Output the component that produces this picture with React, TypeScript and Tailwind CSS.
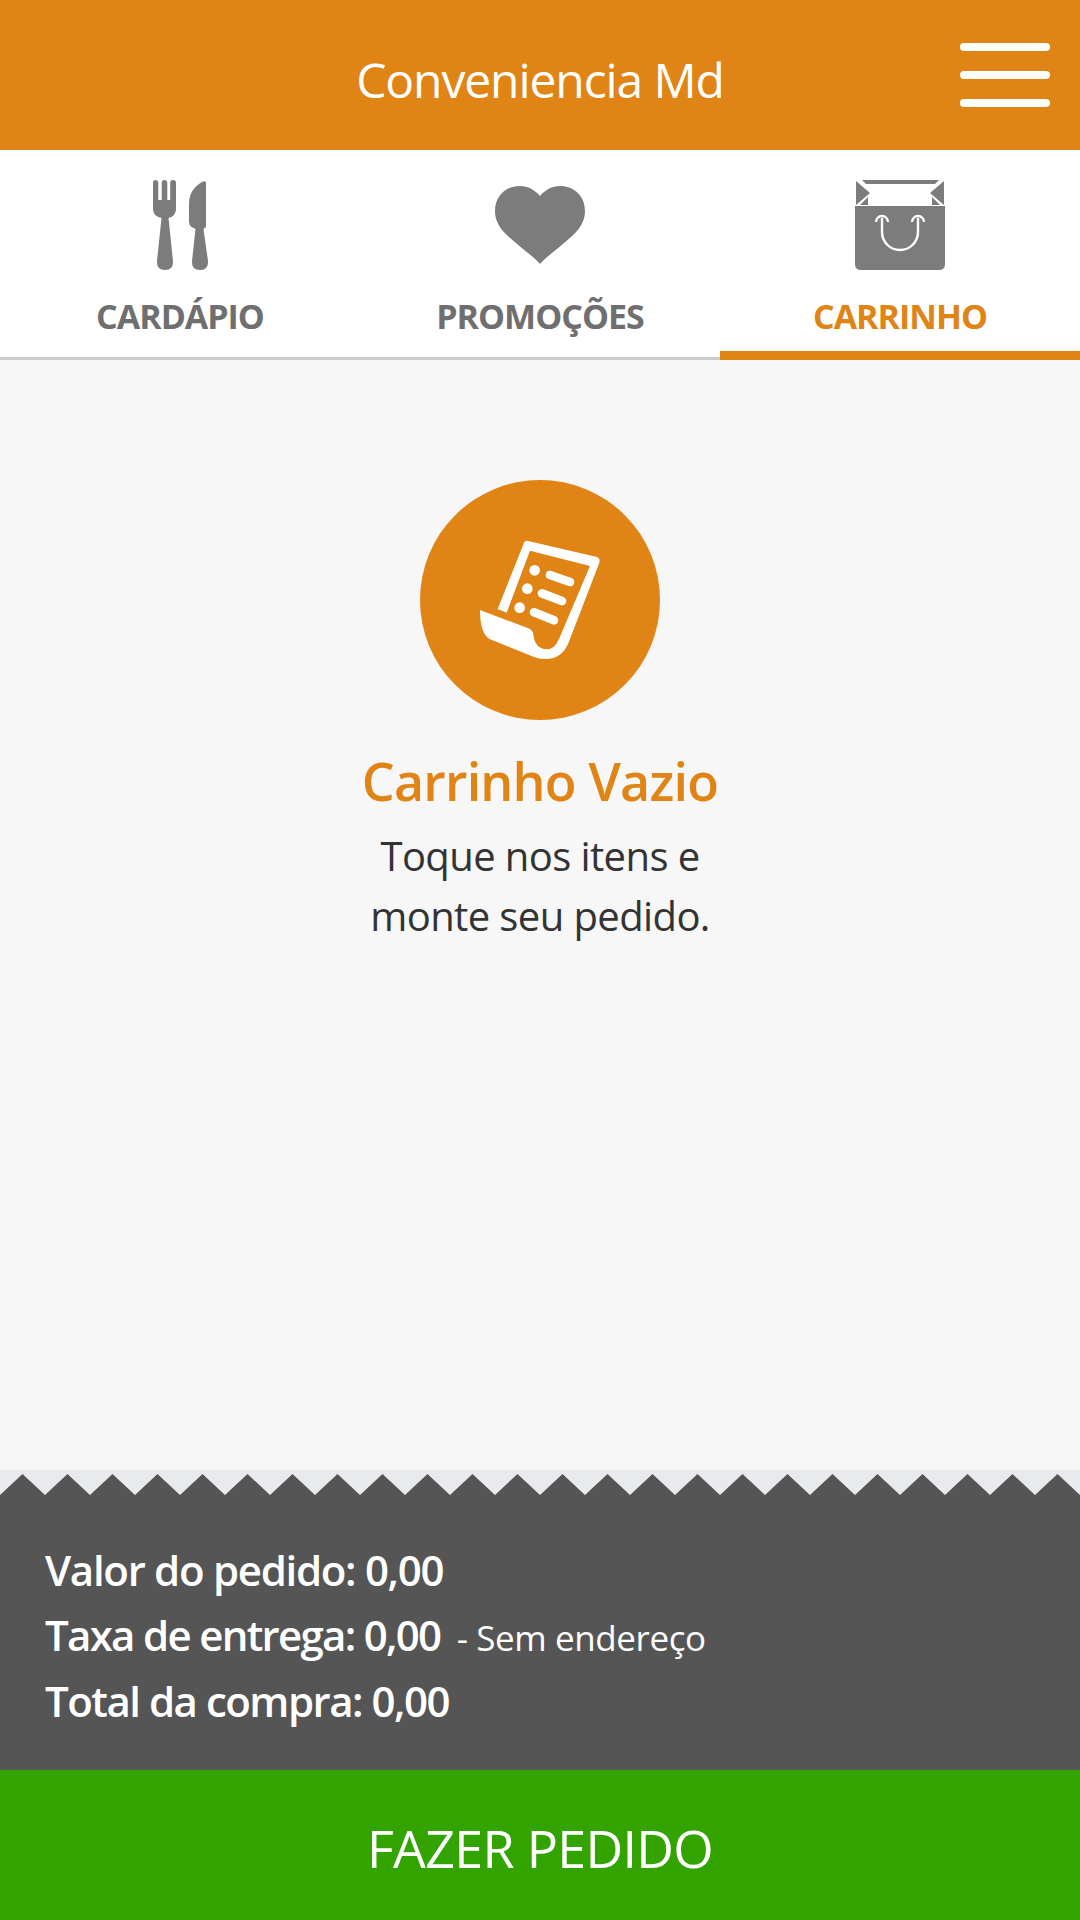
import React from "react";

const teeth = Array.from({ length: 25 }, (_, i) => `${i * 45},25 ${i * 45 + 22.5},4`).join(" ");

const ForkKnifeIcon = () => (
  <svg viewBox="0 0 56 90" className="w-[56px] h-[90px]" fill="#7c7c7c">
    <path d="M1 3 Q1 0 3.6 0 Q6.3 0 6.3 3 L6.3 20 L9.7 20 L9.7 3 Q9.7 0 12.5 0 Q15.3 0 15.3 3 L15.3 20 L18.2 20 L18.2 3 Q18.2 0 21 0 Q24 0 24 3 L24 29 Q24 36 16.5 38 L21 81 Q21.5 90 13 90 Q4.5 90 5 81 L9.5 38 Q1 36 1 29 Z" />
    <path d="M54 3 L54 47 L51.5 49 L56 81 Q56.5 90 48 90 Q39.5 90 40 81 L43.5 49 L39.5 47 Q37 45 37 42 L37 24 Q37 9 51 1.5 Q54 0.5 54 3 Z" />
  </svg>
);

const HeartIcon = () => (
  <svg viewBox="0 0 90 78" className="w-[90px] h-[78px]" fill="#7c7c7c">
    <path d="M45 78 C38 70 26 62 14 51 C5 43 0 35 0 25 C0 10 11 0 25 0 C33 0 40 4 45 10 C50 4 57 0 65 0 C79 0 90 10 90 25 C90 35 85 43 76 51 C64 62 52 70 45 78 Z" />
  </svg>
);

const BagIcon = () => (
  <svg viewBox="0 0 90 90" className="w-[90px] h-[90px]">
    <path fill="#7c7c7c" d="M0 26 L90 26 L90 84 Q90 90 84 90 L6 90 Q0 90 0 84 Z" />
    <path fill="#7c7c7c" d="M7 0 L84 0 L80 4 L11 4 Z" />
    <path fill="#7c7c7c" d="M1 1 L15 13 L1 25 Z" />
    <path fill="#7c7c7c" d="M89 1 L75 13 L89 25 Z" />
    <path fill="#7c7c7c" d="M13 17 L13 25 L5 25 Z" />
    <path fill="#7c7c7c" d="M77 17 L77 25 L85 25 Z" />
    <path
      fill="none"
      stroke="#ffffff"
      strokeWidth="2.4"
      d="M21 42 A6 6 0 0 1 33 42 M57 42 A6 6 0 0 1 69 42 M27 38 L27 52 A18 18 0 0 0 63 52 L63 38"
    />
  </svg>
);

const ReceiptIcon = () => (
  <svg viewBox="240 240 360 360" className="w-[120px] h-[120px]" fill="#ffffff">
    <path d="M372 248 Q375 241 384 243 L588 290 Q602 294 598 308 L505 550 Q485 598 435 597 Q418 597 400 590 L270 538 Q240 522 240 450 L385 505 Q400 511 400 525 Q405 566 440 568 Q465 568 478 535 L570 318 L390 272 L320 458 L293 447 Z" />
    <circle cx="404" cy="331" r="16" />
    <circle cx="382" cy="386" r="16" />
    <circle cx="359" cy="443" r="16" />
    <g stroke="#ffffff" strokeWidth="26" strokeLinecap="round">
      <path d="M450 345 L510 366" />
      <path d="M426 400 L486 423" />
      <path d="M402 457 L462 481" />
    </g>
  </svg>
);

const Tab = ({
  label,
  active,
  children,
}: {
  label: string;
  active?: boolean;
  children: React.ReactNode;
}) => (
  <div
    className={`flex-1 h-[210px] flex flex-col items-center ${
      active ? "border-b-[9px] border-[#df8415]" : "border-b-[3px] border-[#cccccc]"
    }`}
  >
    <div className="h-[90px] mt-[30px] flex items-center justify-center">{children}</div>
    <span
      className={`mt-[23px] text-[34px] leading-[46px] font-bold tracking-[-1px] ${
        active ? "text-[#df8415]" : "text-[#6f6f6f]"
      }`}
    >
      {label}
    </span>
  </div>
);

export default function App() {
  return (
    <div className="w-[1080px] h-[1920px] flex flex-col bg-[#f7f7f7] font-['Open_Sans',sans-serif] overflow-hidden">
      <header className="h-[150px] shrink-0 bg-[#df8415] flex items-center justify-center relative pt-[10px]">
        <h1 className="text-[48px] leading-[60px] text-white tracking-[-1.1px]">Conveniencia Md</h1>
        <div className="absolute left-[960px] top-[43px] w-[90px] flex flex-col gap-[20px]">
          <div className="h-[8px] bg-white rounded-full" />
          <div className="h-[8px] bg-white rounded-full" />
          <div className="h-[8px] bg-white rounded-full" />
        </div>
      </header>

      <nav className="h-[210px] shrink-0 bg-white flex">
        <Tab label="CARDÁPIO">
          <ForkKnifeIcon />
        </Tab>
        <Tab label="PROMOÇÕES">
          <HeartIcon />
        </Tab>
        <Tab label="CARRINHO" active>
          <BagIcon />
        </Tab>
      </nav>

      <main className="flex-1 flex flex-col items-center pt-[120px]">
        <div className="w-[240px] h-[240px] rounded-full bg-[#df8415] flex items-center justify-center">
          <ReceiptIcon />
        </div>
        <h2 className="mt-[25px] text-[52px] leading-[72px] font-semibold text-[#df8415] tracking-[-0.8px]">
          Carrinho Vazio
        </h2>
        <p className="mt-[9px] text-[40px] leading-[60px] text-[#333333] text-center tracking-[-0.6px]">
          Toque nos itens e
          <br />
          monte seu pedido.
        </p>
      </main>

      <footer className="shrink-0">
        <svg viewBox="0 0 1080 26" className="block w-[1080px] h-[26px] bg-[#e9eaee]">
          <polygon fill="#555555" points={`0,26 ${teeth} 1080,25 1080,26`} />
        </svg>
        <div className="h-[274px] bg-[#555555] pl-[45px] pt-[41px] text-white text-[42px] leading-[65px] font-semibold">
          <div className="tracking-[-1.3px]">Valor do pedido: 0,00</div>
          <div className="tracking-[-1.7px]">
            Taxa de entrega: 0,00{" "}
            <span className="ml-[7px] text-[35px] font-normal tracking-[-0.4px]">- Sem endereço</span>
          </div>
          <div className="-mt-[2px] tracking-[-1.5px]">Total da compra: 0,00</div>
        </div>
        <button className="w-full h-[150px] pt-[6px] bg-[#33a300] text-white text-[52px] leading-[60px] tracking-[-0.7px] block">
          FAZER PEDIDO
        </button>
      </footer>
    </div>
  );
}
